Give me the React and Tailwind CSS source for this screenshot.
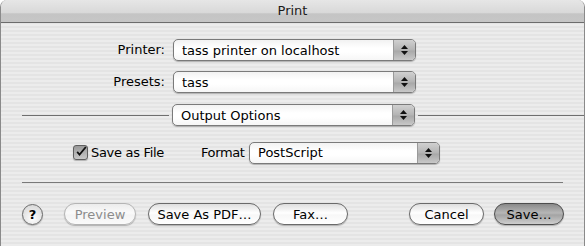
import React from "react";

const font = "font-['DejaVu_Sans',sans-serif]";

function Stepper() {
  return (
    <div className="flex h-full w-[22px] flex-col items-center justify-center gap-[2px] rounded-r-[4px] border-l border-[#9a9a9a] bg-[linear-gradient(#d0d0d0,#b4b4b4_50%,#a8a8a8_55%,#c8c8c8)]">
      <svg width="7" height="4" viewBox="0 0 7 4">
        <path d="M3.5 0L7 4H0z" fill="#111" />
      </svg>
      <svg width="7" height="4" viewBox="0 0 7 4">
        <path d="M0 0h7L3.5 4z" fill="#111" />
      </svg>
    </div>
  );
}

function Popup({ label, className = "" }) {
  return (
    <div
      className={`flex h-[22px] items-stretch rounded-[5px] border border-[#7a7a7a] bg-[linear-gradient(#f2f2f2,#fff_40%,#fff_60%,#f6f6f6)] shadow-[0_1px_1px_rgba(0,0,0,0.25)] ${className}`}
    >
      <div className="flex flex-1 items-center pl-[8px] text-[13px] leading-none text-black">{label}</div>
      <Stepper />
    </div>
  );
}

function Button({ children, width, variant = "normal" }) {
  const styles = {
    normal:
      "border-[#6a6a6a] text-black bg-[linear-gradient(#dedede,#fff_45%,#f7f7f7_55%,#fff)]",
    disabled:
      "border-[#b4b4b4] text-[#8c8c8c] bg-[linear-gradient(#ececec,#fafafa_45%,#f4f4f4_55%,#fafafa)]",
    default:
      "border-[#4d4d4d] text-black bg-[linear-gradient(#8a8a8a,#b7b7b7_45%,#a4a4a4_55%,#cdcdcd)]",
  };
  return (
    <div
      style={{ width }}
      className={`flex h-[22px] items-center justify-center rounded-full border text-[13px] leading-none shadow-[0_1px_1px_rgba(0,0,0,0.25)] ${styles[variant]}`}
    >
      {children}
    </div>
  );
}

export default function App() {
  return (
    <div
      className={`${font} flex h-[246px] w-[585px] flex-col overflow-hidden rounded-t-[7px] border-x border-[#8a8a8a] bg-[image:repeating-linear-gradient(180deg,#ececec_0px,#ececec_2px,#e4e4e4_2px,#e4e4e4_4px)]`}
    >
      <div className="flex h-[23px] shrink-0 items-center justify-center border-b border-[#6c6c6c] bg-[linear-gradient(#e6e6e6,#d8d8d8_60%,#c4c4c4_62%,#c6c6c6)] text-[13px] text-[#1a1a1a]">
        Print
      </div>

      <div className="mt-[16px] flex h-[22px] items-center">
        <div className="w-[164px] text-right text-[13px]">Printer:</div>
        <Popup label="tass printer on localhost" className="ml-[8px] w-[243px]" />
      </div>

      <div className="mt-[10px] flex h-[22px] items-center">
        <div className="w-[164px] text-right text-[13px]">Presets:</div>
        <Popup label="tass" className="ml-[8px] w-[243px]" />
      </div>

      <div className="mt-[11px] flex h-[22px] items-center">
        <div className="ml-[21px] h-px w-[147px] bg-[#6f6f6f]" />
        <Popup label="Output Options" className="ml-[3px] w-[243px]" />
        <div className="ml-[3px] h-px flex-1 bg-[#6f6f6f]" />
      </div>

      <div className="mt-[16px] flex h-[21px] items-center">
        <div className="ml-[72px] flex h-[15px] w-[15px] items-center justify-center rounded-[3px] border border-[#5f5f5f] bg-[linear-gradient(#9a9a9a,#c8c8c8)] shadow-[0_1px_1px_rgba(0,0,0,0.25)]">
          <svg width="14" height="13" viewBox="0 0 14 13" className="-mt-[2px] ml-[2px]">
            <path d="M1.5 7l3 3.5L12.5 0.8" stroke="#111" strokeWidth="2.2" fill="none" />
          </svg>
        </div>
        <div className="ml-[3px] w-[71px] whitespace-nowrap text-[13px] tracking-[-0.3px]">Save as File</div>
        <div className="ml-[39px] w-[44px] whitespace-nowrap text-[13px] tracking-[-0.4px]">Format</div>
        <Popup label="PostScript" className="ml-[4px] w-[191px]" />
      </div>

      <div className="mx-[21px] mt-[19px] h-px bg-[#7a7a7a]" />

      <div className="mt-[20px] flex items-center">
        <div className="ml-[21px] flex h-[21px] w-[21px] items-center justify-center rounded-full border border-[#6a6a6a] bg-[radial-gradient(circle_at_50%_70%,#fff,#d0d0d0)] text-[13px] font-bold leading-none shadow-[0_1px_1px_rgba(0,0,0,0.25)]">
          ?
        </div>
        <div className="ml-[21px]">
          <Button width={72} variant="disabled">Preview</Button>
        </div>
        <div className="ml-[12px]">
          <Button width={113}>Save As PDF…</Button>
        </div>
        <div className="ml-[12px]">
          <Button width={75}>Fax…</Button>
        </div>
        <div className="ml-[61px]">
          <Button width={75}>Cancel</Button>
        </div>
        <div className="ml-[10px]">
          <Button width={70} variant="default">Save…</Button>
        </div>
      </div>
    </div>
  );
}
